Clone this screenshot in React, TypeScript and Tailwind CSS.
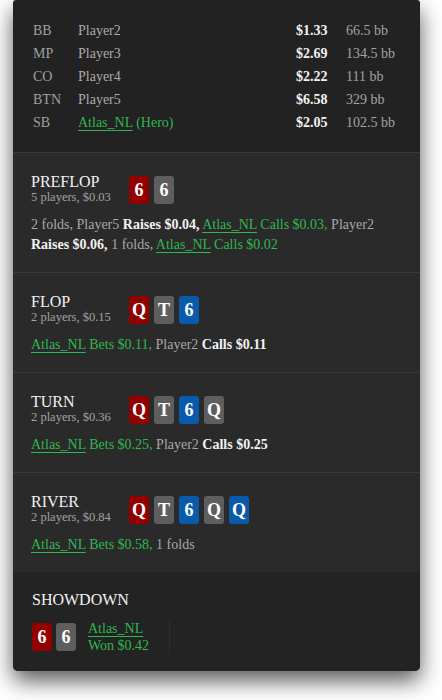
import React from 'react'

type Card = { r: string; c: 'red' | 'gray' | 'blue' }

const seats = [
  { pos: 'BB', name: 'Player2', stack: '$1.33', bb: '66.5 bb' },
  { pos: 'MP', name: 'Player3', stack: '$2.69', bb: '134.5 bb' },
  { pos: 'CO', name: 'Player4', stack: '$2.22', bb: '111 bb' },
  { pos: 'BTN', name: 'Player5', stack: '$6.58', bb: '329 bb' },
  { pos: 'SB', name: 'Atlas_NL', hero: true, stack: '$2.05', bb: '102.5 bb' },
]

const cardBg = {
  red: 'bg-[#930000]',
  gray: 'bg-[#5e5e5e]',
  blue: 'bg-[#0a5aac]',
}

function PlayingCard({ card }: { card: Card }) {
  return (
    <div className={`w-[20px] h-[28px] rounded-[3px] flex items-center justify-center text-[18px] font-bold text-white leading-none ${cardBg[card.c]}`}>
      {card.r}
    </div>
  )
}

function Hero() {
  return <span className="underline underline-offset-[3px] decoration-1">Atlas_NL</span>
}

function Street({ title, sub, cards, children }: { title: string; sub: string; cards: Card[]; children: React.ReactNode }) {
  return (
    <div className="border-t border-[#383838] bg-[#2a2a2a] px-[18px] pt-[21px] pb-[17px]">
      <div className="flex items-center gap-[18px]">
        <div className="w-[80px] shrink-0">
          <div className="text-[16px] leading-[16px] text-[#f2f2f2]">{title}</div>
          <div className="text-[12.5px] leading-[15px] text-[#a3a3a3] whitespace-nowrap">{sub}</div>
        </div>
        <div className="flex gap-[5px]">
          {cards.map((c, i) => <PlayingCard key={i} card={c} />)}
        </div>
      </div>
      <div className="mt-[10px] text-[14px] leading-[20px] text-[#a8a8a8]">{children}</div>
    </div>
  )
}

const Q_R: Card = { r: 'Q', c: 'red' }
const T_G: Card = { r: 'T', c: 'gray' }
const S_B: Card = { r: '6', c: 'blue' }
const Q_G: Card = { r: 'Q', c: 'gray' }
const Q_B: Card = { r: 'Q', c: 'blue' }

export default function App() {
  return (
    <div className="min-h-screen bg-white pl-[13px] pr-[22px] pb-[28px]" style={{ fontFamily: '"Liberation Serif", "Times New Roman", serif' }}>
      <div className="w-[407px] rounded-b-[5px] rounded-t-[3px] overflow-hidden bg-[#222222] shadow-[0_10px_22px_rgba(0,0,0,0.65)]">
        {/* seats */}
        <div className="pl-[20px] pr-[12px] pt-[19px] pb-[18px] text-[14px]">
          {seats.map((s) => (
            <div key={s.pos} className="flex items-center h-[23px]">
              <span className="w-[45px] text-[#a0a0a0]">{s.pos}</span>
              <span className={`flex-1 ${s.hero ? 'text-[#2fb84e]' : 'text-[#ababab]'}`}>
                {s.hero ? <><Hero /> (Hero)</> : s.name}
              </span>
              <span className="w-[50px] font-bold text-[#f2f2f2]">{s.stack}</span>
              <span className="w-[62px] text-[#a3a3a3]">{s.bb}</span>
            </div>
          ))}
        </div>

        <Street title="PREFLOP" sub="5 players, $0.03" cards={[{ r: '6', c: 'red' }, { r: '6', c: 'gray' }]}>
          2 folds, Player5 <b className="text-[#f2f2f2]">Raises $0.04,</b>{' '}
          <span className="text-[#2fb84e]"><Hero /> Calls $0.03,</span> Player2{' '}
          <b className="text-[#f2f2f2]">Raises $0.06,</b> 1 folds,{' '}
          <span className="text-[#2fb84e]"><Hero /> Calls $0.02</span>
        </Street>

        <Street title="FLOP" sub="2 players, $0.15" cards={[Q_R, T_G, S_B]}>
          <span className="text-[#2fb84e]"><Hero /> Bets $0.11,</span> Player2{' '}
          <b className="text-[#f2f2f2]">Calls $0.11</b>
        </Street>

        <Street title="TURN" sub="2 players, $0.36" cards={[Q_R, T_G, S_B, Q_G]}>
          <span className="text-[#2fb84e]"><Hero /> Bets $0.25,</span> Player2{' '}
          <b className="text-[#f2f2f2]">Calls $0.25</b>
        </Street>

        <Street title="RIVER" sub="2 players, $0.84" cards={[Q_R, T_G, S_B, Q_G, Q_B]}>
          <span className="text-[#2fb84e]"><Hero /> Bets $0.58,</span> 1 folds
        </Street>

        {/* showdown */}
        <div className="bg-[#232323] px-[19px] pt-[20px] pb-[17px]">
          <div className="text-[16px] leading-[16px] text-[#f2f2f2]">SHOWDOWN</div>
          <div className="mt-[12px] flex">
            <div className="flex items-center gap-[4px] pr-[20px] border-r border-[#2f2f2f]">
              <PlayingCard card={{ r: '6', c: 'red' }} />
              <PlayingCard card={{ r: '6', c: 'gray' }} />
              <div className="ml-[8px] text-[14px] leading-[17px] text-[#2fb84e]">
                <div><Hero /></div>
                <div>Won $0.42</div>
              </div>
            </div>
          </div>
        </div>
      </div>
    </div>
  )
}
